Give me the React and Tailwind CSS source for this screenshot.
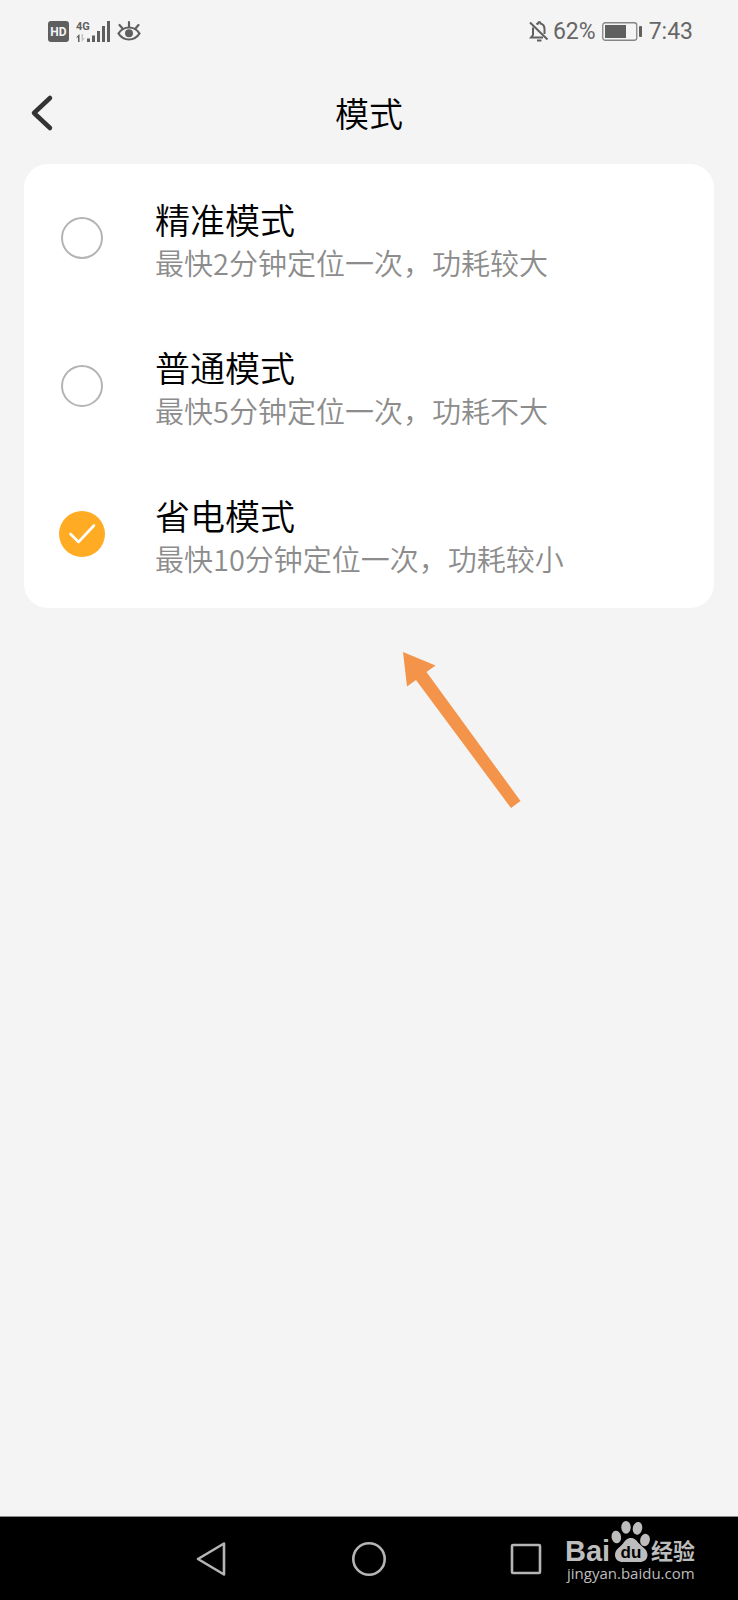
import { useState } from "react";

const modes = [
  { id: "precise", title: "精准模式", detail: "最快2分钟定位一次，功耗较大" },
  { id: "normal", title: "普通模式", detail: "最快5分钟定位一次，功耗不大" },
  { id: "saving", title: "省电模式", detail: "最快10分钟定位一次，功耗较小" },
];

function HdIcon() {
  return (
    <svg width="21" height="21" viewBox="0 0 21 21" aria-hidden="true">
      <rect width="21" height="21" rx="3" fill="#5f5f5f" />
      <text x="10.5" y="15" textAnchor="middle" fontSize="12" className="font-['Roboto',sans-serif] font-bold" fill="#f4f4f4">HD</text>
    </svg>
  );
}

function SignalIcon() {
  return (
    <svg width="34" height="23" viewBox="0 0 34 23" aria-hidden="true">
      <text x="0" y="10" fontSize="11" className="font-['Roboto',sans-serif] font-bold" fill="#5f5f5f">4G</text>
      <path d="M3.5 22v-8L0 17.5h2V22z" fill="#5f5f5f" />
      <path d="M5.5 14v8L9 18H7v-4z" fill="#c4c4c4" />
      <path d="M11 18.500h3V22h-3zM16 15.500h3V22h-3zM21 11h3v11h-3zM26 6h3v16h-3zM31 1h3v21h-3z" fill="#5f5f5f" />
    </svg>
  );
}

function EyeIcon() {
  return (
    <svg width="24" height="22" viewBox="0 0 24 22" fill="none" stroke="#5f5f5f" strokeWidth="2.200" strokeLinecap="round" aria-hidden="true">
      <path d="M1.500 13.500C4 9.500 7.500 7.500 12 7.500s8 2 10.500 6c-2.500 4-6 6-10.500 6s-8-2-10.500-6z" />
      <path d="M12 2v5M2.500 5l3.500 4M21.500 5L18 9" />
      <circle cx="12" cy="13.300" r="4" fill="#5f5f5f" stroke="none" />
    </svg>
  );
}

function BellOffIcon() {
  return (
    <svg width="20" height="22" viewBox="0 0 20 22" fill="none" stroke="#5f5f5f" strokeWidth="2" aria-hidden="true">
      <path d="M1 2.500l17.500 17" />
      <path d="M7.500 4.500C8 4 8.500 3.700 9 3.500c0-2 2.500-2 2.500 0 3 .8 4 3 4 5.500v5" />
      <path d="M4 7.500V15l-2 2.500h12" />
      <path d="M8 20.500h4.500" />
    </svg>
  );
}

function BatteryIcon() {
  return (
    <svg width="41" height="19" viewBox="0 0 41 19" aria-hidden="true">
      <rect x="0.750" y="0.750" width="34" height="17.500" rx="2.500" fill="none" stroke="#858585" strokeWidth="1.300" />
      <rect x="3" y="3" width="21" height="13" fill="#5f5f5f" />
      <rect x="37" y="4" width="3" height="11" rx="1" fill="#5f5f5f" />
    </svg>
  );
}

function StatusBar() {
  return (
    <div className="flex h-[62px] items-center justify-between pl-12 pr-[45px] font-['Roboto',sans-serif] text-[23px] font-normal leading-none text-[#666]">
      <div className="flex items-center gap-[7px]">
        <HdIcon />
        <SignalIcon />
        <EyeIcon />
      </div>
      <div className="flex items-center gap-1.5">
        <div className="flex items-center gap-1">
          <BellOffIcon />
          <span>62%</span>
        </div>
        <BatteryIcon />
        <span>7:43</span>
      </div>
    </div>
  );
}

function ModeRow({ mode, checked, onSelect }) {
  return (
    <label className="flex h-[148px] cursor-pointer items-center gap-[50px] pl-[35px] pr-6">
      <span className="grid size-[46px] shrink-0 place-items-center">
        <input
          type="radio"
          name="mode"
          value={mode.id}
          checked={checked}
          onChange={() => onSelect(mode.id)}
          className="col-start-1 row-start-1 size-[42px] appearance-none rounded-full border-2 border-[#b4b4b4] checked:size-[46px] checked:border-0 checked:bg-[#ffab24]"
        />
        {checked && (
          <svg width="28" height="22" viewBox="0 0 28 22" fill="none" stroke="#fff" strokeWidth="2.600" strokeLinecap="round" strokeLinejoin="round" className="pointer-events-none col-start-1 row-start-1" aria-hidden="true">
            <path d="M2.500 11l8 8L26 2.500" />
          </svg>
        )}
      </span>
      <span className="flex flex-col pt-1">
        <span className="text-[35px] leading-[44px] text-black">{mode.title}</span>
        <span className="text-[29px] leading-[42px] text-[#8c8c8c]">{mode.detail}</span>
      </span>
    </label>
  );
}

function BaiduMark() {
  return (
    <svg width="140" height="68" viewBox="0 0 140 68" className="absolute right-8 top-0" fill="#bdbdbd" role="img" aria-label="Baidu">
      <text x="-1" y="44" fontSize="29" className="font-['Liberation_Sans',sans-serif] font-bold">Bai</text>
      <ellipse cx="50.300" cy="20" rx="4.800" ry="6.300" transform="rotate(-10 50.300 20)" />
      <ellipse cx="60" cy="10.300" rx="4.700" ry="6.400" />
      <ellipse cx="71.500" cy="11.300" rx="4.700" ry="6.400" transform="rotate(12 71.500 11.300)" />
      <ellipse cx="79" cy="23" rx="4.800" ry="6.300" transform="rotate(14 79 23)" />
      <path d="M65 21c-4 0-6 2.500-8 5.500S49 32 49 38c0 4.500 3.500 7 8 7h16.500c4.500 0 8-2.500 8-7 0-6-6-8.500-8.500-11.500S69 21 65 21z" />
      <text x="65" y="41" textAnchor="middle" fontSize="17" className="font-['Liberation_Sans',sans-serif] font-bold" fill="#000">du</text>
      <text x="85" y="42" fontSize="22" className="font-['Noto_Sans_CJK_SC',sans-serif] font-bold">经验</text>
      <text x="1" y="62" fontSize="15" className="font-['Open_Sans',sans-serif] font-medium">jingyan.baidu.com</text>
    </svg>
  );
}

function NavBar() {
  return (
    <nav className="relative mt-auto flex h-[84px] items-center justify-center gap-[121px] border-t border-[#8a8a8a] bg-black">
      <button type="button" aria-label="返回" className="grid size-9 place-items-center">
        <svg width="34" height="36" viewBox="0 0 34 36" fill="none" stroke="#b5b5b5" strokeWidth="2.600" strokeLinejoin="round">
          <path d="M29 2.500v31L3 18z" />
        </svg>
      </button>
      <button type="button" aria-label="主页" className="grid size-9 place-items-center">
        <svg width="36" height="36" viewBox="0 0 36 36" fill="none" stroke="#b5b5b5" strokeWidth="2.600">
          <circle cx="18" cy="18" r="15.700" />
        </svg>
      </button>
      <button type="button" aria-label="最近任务" className="grid size-9 place-items-center">
        <svg width="36" height="36" viewBox="0 0 36 36" fill="none" stroke="#b5b5b5" strokeWidth="2.600">
          <rect x="4" y="4" width="28" height="28" rx="1" />
        </svg>
      </button>
      <BaiduMark />
    </nav>
  );
}

export default function App() {
  const [selected, setSelected] = useState("saving");

  return (
    <div className="flex min-h-screen flex-col bg-[#f4f4f4] font-['Noto_Sans_CJK_SC',sans-serif] font-[350]">
      <StatusBar />

      <header className="grid h-[102px] grid-cols-[1fr_auto_1fr] items-center px-7">
        <button type="button" aria-label="返回" className="w-7">
          <svg width="28" height="38" viewBox="0 0 28 38" fill="none" stroke="#333" strokeWidth="4.500" strokeLinecap="round" strokeLinejoin="round">
            <path d="M22 4L6 19l16 15" />
          </svg>
        </button>
        <h1 id="mode-heading" className="text-[34px] leading-[44px] text-black">模式</h1>
      </header>

      <main>
        <fieldset aria-labelledby="mode-heading" className="mx-6 overflow-hidden rounded-3xl bg-white">
          {modes.map((mode) => (
            <ModeRow key={mode.id} mode={mode} checked={selected === mode.id} onSelect={setSelected} />
          ))}
        </fieldset>

        {/* Pointer towards the selected mode */}
        <svg width="124" height="158" viewBox="0 0 124 158" className="ml-[54%] mt-[43px]" fill="#f3944a" aria-hidden="true">
          <path d="M4 1l32.500 13.500-9 6.500L121.500 150l-9.500 7L17 29l-9 6.500z" />
        </svg>
      </main>

      <NavBar />
    </div>
  );
}
